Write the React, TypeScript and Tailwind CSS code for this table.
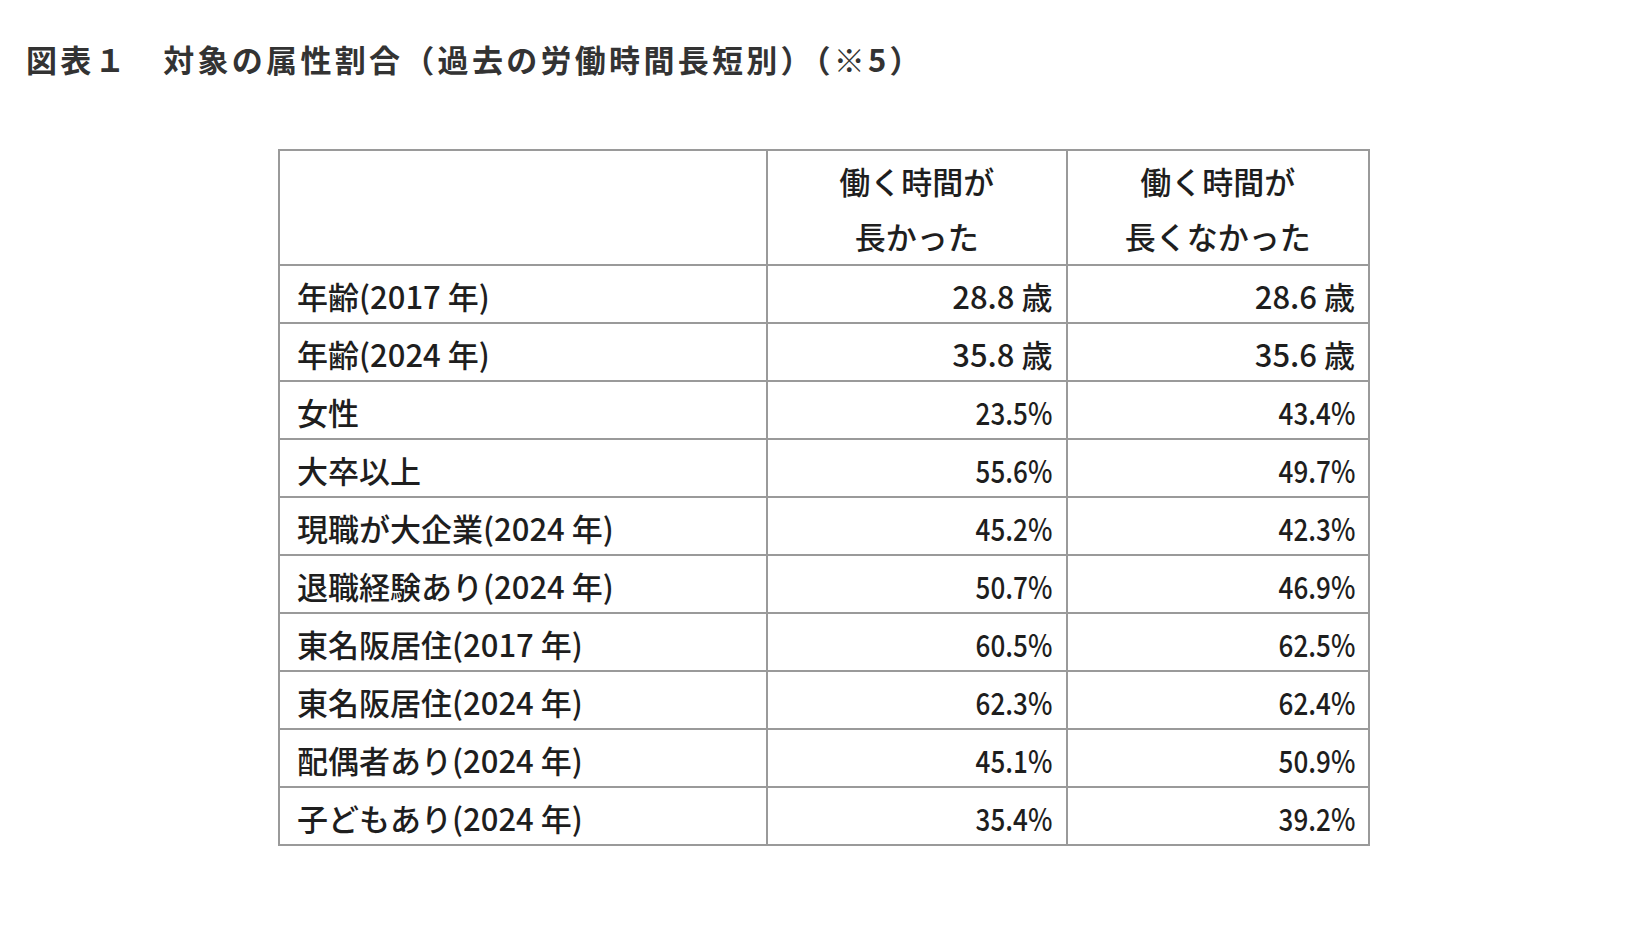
import React from "react";

const rows: [string, string, string][] = [
  ["年齢(2017 年)", "28.8 歳", "28.6 歳"],
  ["年齢(2024 年)", "35.8 歳", "35.6 歳"],
  ["女性", "23.5%", "43.4%"],
  ["大卒以上", "55.6%", "49.7%"],
  ["現職が大企業(2024 年)", "45.2%", "42.3%"],
  ["退職経験あり(2024 年)", "50.7%", "46.9%"],
  ["東名阪居住(2017 年)", "60.5%", "62.5%"],
  ["東名阪居住(2024 年)", "62.3%", "62.4%"],
  ["配偶者あり(2024 年)", "45.1%", "50.9%"],
  ["子どもあり(2024 年)", "35.4%", "39.2%"],
];

function Value({ v }: { v: string }) {
  if (v.endsWith("%")) {
    return <span className="inline-block origin-right scale-x-[0.84]">{v}</span>;
  }
  return <span>{v}</span>;
}

export default function App() {
  return (
    <div className="min-h-[944px] w-full bg-white pl-[26px] pt-[40px]" style={{ fontFamily: '"Noto Sans CJK JP", "Noto Sans", sans-serif' }}>
      <h1 className="text-[31px] font-bold leading-[37px] tracking-[3.3px] text-[#333333]">
        図表１　対象の属性割合（過去の労働時間長短別）（※5）
      </h1>
      <div className="mt-[72px] ml-[252px]">
        <table className="border-collapse text-[#1e1e1e]" style={{ width: 1092 }}>
          <colgroup>
            <col className="w-[489px]" />
            <col className="w-[300px]" />
            <col className="w-[303px]" />
          </colgroup>
          <thead>
            <tr className="h-[115px]">
              <th className="border-2 border-[#9a9a9a]"></th>
              <th className="border-2 border-[#9a9a9a] text-center align-middle text-[31px] font-medium leading-[55px]">
                働く時間が
                <br />
                長かった
              </th>
              <th className="border-2 border-[#9a9a9a] text-center align-middle text-[31px] font-medium leading-[55px]">
                働く時間が
                <br />
                長くなかった
              </th>
            </tr>
          </thead>
          <tbody>
            {rows.map((r) => (
              <tr key={r[0]} className="h-[58px]">
                <td className="border-2 border-[#9a9a9a] pl-[17px] pt-[3px] text-left align-middle text-[31px] font-medium leading-none">
                  {r[0]}
                </td>
                <td className="border-2 border-[#9a9a9a] pr-[13px] pt-[3px] text-right align-middle text-[31px] font-medium leading-none">
                  <Value v={r[1]} />
                </td>
                <td className="border-2 border-[#9a9a9a] pr-[13px] pt-[3px] text-right align-middle text-[31px] font-medium leading-none">
                  <Value v={r[2]} />
                </td>
              </tr>
            ))}
          </tbody>
        </table>
      </div>
    </div>
  );
}
